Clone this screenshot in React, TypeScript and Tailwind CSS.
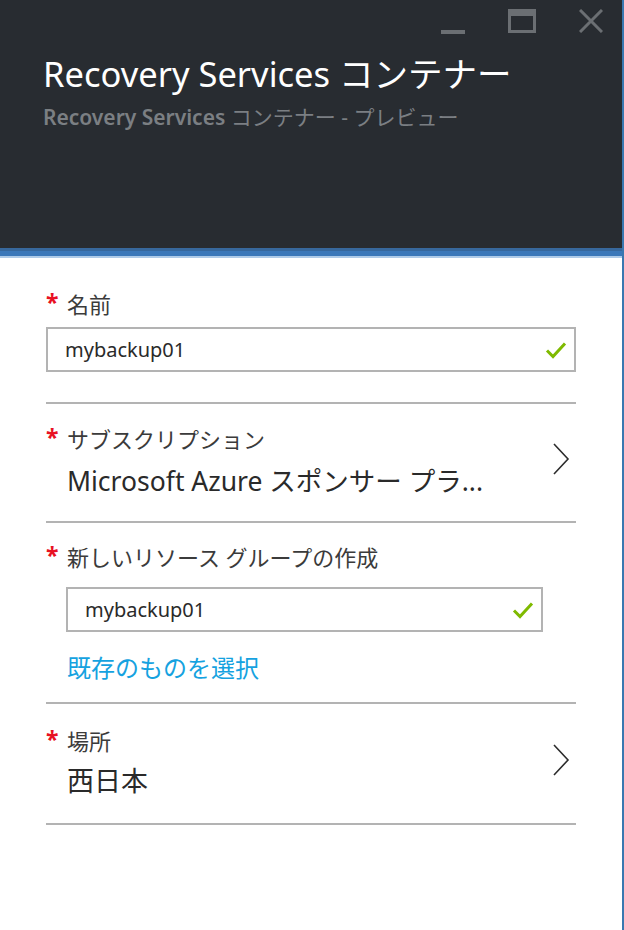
const font = { fontFamily: '"Noto Sans", "Noto Sans CJK JP", sans-serif' }

function Check() {
  return (
    <svg width="22" height="18" viewBox="0 0 22 18" className="shrink-0">
      <path d="M2 9.5 L8 15.5 L20 2.5" fill="none" stroke="#7fba00" strokeWidth="3" />
    </svg>
  )
}

function Chevron() {
  return (
    <svg width="18" height="32" viewBox="0 0 18 32" className="shrink-0">
      <path d="M2 1 L16 16 L2 31" fill="none" stroke="#2c2c2c" strokeWidth="1.6" />
    </svg>
  )
}

function Label({ text }: { text: string }) {
  return (
    <div className="flex items-center h-[30px]">
      <span className="w-[21px] -mt-[4px] text-[#e81123] text-[23px] leading-[30px] font-bold">*</span>
      <span className="text-[22px] leading-[30px] text-[#3b3b3b]">{text}</span>
    </div>
  )
}

function TextBox({ value }: { value: string }) {
  return (
    <div className="flex items-center justify-between h-[45px] border-2 border-[#b3b3b3] pl-[17px] pr-[7px]">
      <span className="text-[20px] text-[#2a2a2a] leading-none">{value}</span>
      <Check />
    </div>
  )
}

export default function App() {
  return (
    <div className="w-[624px] h-[930px] flex flex-col bg-white border-r-2 border-[#3a78b0]" style={font}>
      <div className="h-[248px] bg-[#282c31] flex flex-col px-[43px] relative">
        <div className="absolute top-[9px] right-[19px] flex items-start gap-[43px]">
          <div className="w-[24px] h-[25px] flex items-end">
            <div className="w-[24px] h-[4px] bg-[#6b6f73]" />
          </div>
          <div className="w-[28px] h-[24px] border-[#6b6f73] border-[3px] border-t-[7px]" />
          <svg width="24" height="24" viewBox="0 0 24 24">
            <path d="M1 1 L23 23 M23 1 L1 23" stroke="#6b6f73" strokeWidth="3" />
          </svg>
        </div>
        <div className="mt-[52px] text-[34.5px] leading-[44px] text-white">
          Recovery Services コンテナー
        </div>
        <div className="mt-[8px] text-[21px] leading-[26px] text-[#7b7f83]">
          <span className="font-semibold">Recovery Services</span> コンテナー - プレビュー
        </div>
      </div>
      <div className="h-[3px] bg-[#37689c]" />
      <div className="h-[5px] bg-[#3b78b9]" />
      <div className="h-[2px] bg-[#aecbe8]" />
      <div className="flex flex-col px-[46px]">
        <div className="pt-[31px] pb-[30px] border-b-2 border-[#b3b3b3]">
          <Label text="名前" />
          <div className="mt-[8px]">
            <TextBox value="mybackup01" />
          </div>
        </div>
        <div className="flex items-start justify-between pt-[20px] pb-[23px] border-b-2 border-[#b3b3b3]">
          <div className="flex flex-col">
            <Label text="サブスクリプション" />
            <div className="pl-[21px] mt-[10px] text-[26.5px] leading-[34px] text-[#2a2a2a]">
              Microsoft Azure スポンサー プラ...
            </div>
          </div>
          <div className="pr-[6px] pt-[19px]">
            <Chevron />
          </div>
        </div>
        <div className="pt-[19px] pb-[18px] border-b-2 border-[#b3b3b3]">
          <Label text="新しいリソース グループの作成" />
          <div className="pl-[20px] pr-[33px] mt-[15px]">
            <TextBox value="mybackup01" />
          </div>
          <div className="pl-[21px] mt-[20px] text-[24px] leading-[32px] text-[#15a2e0]">既存のものを選択</div>
        </div>
        <div className="flex items-start justify-between pt-[22px] pb-[24px] border-b-2 border-[#b3b3b3]">
          <div className="flex flex-col">
            <Label text="場所" />
            <div className="pl-[21px] mt-[7px] text-[27px] leading-[36px] text-[#2a2a2a]">西日本</div>
          </div>
          <div className="pr-[6px] pt-[18px]">
            <Chevron />
          </div>
        </div>
      </div>
    </div>
  )
}
